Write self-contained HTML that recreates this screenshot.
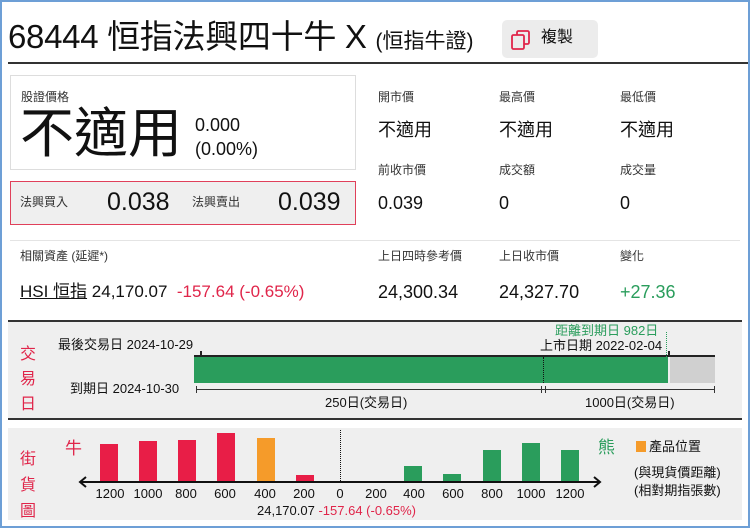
<!DOCTYPE html><html><head><meta charset="utf-8"><style>
*{margin:0;padding:0;box-sizing:border-box}
body{width:750px;height:528px;position:relative;background:#fff;font-family:"Liberation Sans","Noto Sans CJK TC",sans-serif;color:#111;overflow:hidden}
.a{position:absolute;white-space:nowrap;line-height:1}
.s{font-size:12px;color:#333}
.v{font-size:18px;color:#111}
.r{color:#e0254a}.g{color:#2a9d5c}
.bar{position:absolute;width:18px}
.lb{position:absolute;top:486px;font-size:13px;width:40px;text-align:center;margin-left:-20px}
</style></head><body>
<div style="position:absolute;inset:0;border:2px solid #6d9fd6;z-index:9;pointer-events:none"></div>
<div class="a" style="left:8px;top:20px;font-size:33px;letter-spacing:-0.3px">68444 恒指法興四十牛 X <span style="font-size:21px;letter-spacing:0">(恒指牛證)</span></div>
<div style="position:absolute;left:502px;top:20px;width:96px;height:38px;background:#ececec;border-radius:5px"></div>
<svg class="a" style="left:510px;top:29px" width="22" height="22" viewBox="0 0 22 22"><rect x="7" y="2" width="12" height="13" rx="1.5" fill="none" stroke="#e0254a" stroke-width="1.8"/><rect x="2" y="6" width="12" height="14" rx="1.5" fill="#ececec" stroke="#e0254a" stroke-width="1.8"/></svg>
<div class="a" style="left:541px;top:30px;font-size:16px">複製</div>
<div style="position:absolute;left:8px;top:62px;width:742px;height:1.5px;background:#333"></div>
<div style="position:absolute;left:10px;top:75px;width:346px;height:95px;border:1px solid #ddd"></div>
<div class="a s" style="left:21px;top:91px">股證價格</div>
<div class="a" style="left:20px;top:107px;font-size:54px">不適用</div>
<div class="a" style="left:195px;top:116px;font-size:18px">0.000</div>
<div class="a" style="left:195px;top:140px;font-size:18px">(0.00%)</div>
<div style="position:absolute;left:10px;top:181px;width:346px;height:44px;border:1.5px solid #e0405a;background:#efefef"></div>
<div class="a s" style="left:20px;top:196px">法興買入</div>
<div class="a" style="left:107px;top:190px;font-size:25px">0.038</div>
<div class="a s" style="left:192px;top:196px">法興賣出</div>
<div class="a" style="left:278px;top:190px;font-size:25px">0.039</div>
<div class="a s" style="left:378px;top:91px">開市價</div><div class="a s" style="left:499px;top:91px">最高價</div><div class="a s" style="left:620px;top:91px">最低價</div>
<div class="a v" style="left:378px;top:121px">不適用</div><div class="a v" style="left:499px;top:121px">不適用</div><div class="a v" style="left:620px;top:121px">不適用</div>
<div class="a s" style="left:378px;top:164px">前收市價</div><div class="a s" style="left:499px;top:164px">成交額</div><div class="a s" style="left:620px;top:164px">成交量</div>
<div class="a v" style="left:378px;top:194px">0.039</div><div class="a v" style="left:499px;top:194px">0</div><div class="a v" style="left:620px;top:194px">0</div>
<div style="position:absolute;left:10px;top:240px;width:730px;height:1px;background:#e4e4e4"></div>
<div class="a s" style="left:20px;top:250px">相關資產 (延遲*)</div>
<div class="a s" style="left:378px;top:250px">上日四時參考價</div><div class="a s" style="left:499px;top:250px">上日收市價</div><div class="a s" style="left:620px;top:250px">變化</div>
<div class="a" style="left:20px;top:283px;font-size:17px"><span style="text-decoration:underline">HSI 恒指</span> 24,170.07 <span class="r">&nbsp;-157.64 (-0.65%)</span></div>
<div class="a v" style="left:378px;top:283px">24,300.34</div><div class="a v" style="left:499px;top:283px">24,327.70</div><div class="a v g" style="left:620px;top:283px">+27.36</div>
<div style="position:absolute;left:8px;top:320px;width:734px;height:2px;background:#333"></div>
<div style="position:absolute;left:8px;top:322px;width:734px;height:96px;background:#efefef"></div>
<div style="position:absolute;left:8px;top:418px;width:734px;height:2px;background:#333"></div>
<div style="position:absolute;left:8px;top:428px;width:734px;height:92px;background:#efefef"></div>
<div class="a r" style="left:20px;top:342px;font-size:16px;line-height:25px;white-space:normal;width:18px">交易日</div>
<div class="a r" style="left:20px;top:447px;font-size:16px;line-height:26px;white-space:normal;width:18px">街貨圖</div>
<div class="a" style="left:58px;top:338px;font-size:13px">最後交易日 2024-10-29</div>
<div class="a g" style="left:555px;top:324px;font-size:13px">距離到期日 982日</div>
<div class="a" style="left:540px;top:339px;font-size:13px">上市日期 2022-02-04</div>
<div class="a" style="left:70px;top:382px;font-size:13px">到期日 2024-10-30</div>
<div style="position:absolute;left:194px;top:355px;width:521px;height:2px;background:#222"></div>
<div style="position:absolute;left:200px;top:351px;width:1.5px;height:5px;background:#222"></div>
<div style="position:absolute;left:668px;top:351px;width:1.5px;height:5px;background:#222"></div>
<div style="position:absolute;left:194px;top:357px;width:474px;height:26px;background:#2a9d5c"></div>
<div style="position:absolute;left:670px;top:357px;width:45px;height:26px;background:#d0d0d0"></div>
<div style="position:absolute;left:543px;top:357px;height:26px;border-left:1.5px dotted #111"></div>
<div style="position:absolute;left:666px;top:332px;height:25px;border-left:1.5px dotted #2a9d5c"></div>
<div style="position:absolute;left:196px;top:389px;width:519px;height:1px;background:#333"></div>
<div style="position:absolute;left:196px;top:386px;width:1px;height:7px;background:#333"></div>
<div style="position:absolute;left:541px;top:386px;width:1px;height:7px;background:#333"></div>
<div style="position:absolute;left:545px;top:386px;width:1px;height:7px;background:#333"></div>
<div style="position:absolute;left:714px;top:386px;width:1px;height:7px;background:#333"></div>
<div class="a" style="left:325px;top:396px;font-size:13px">250日(交易日)</div>
<div class="a" style="left:585px;top:396px;font-size:13px">1000日(交易日)</div>
<div class="a r" style="left:65px;top:440px;font-size:17px">牛</div>
<div class="a g" style="left:598px;top:439px;font-size:17px">熊</div>
<div style="position:absolute;left:636px;top:441px;width:10px;height:11px;background:#f59b2a"></div>
<div class="a" style="left:649px;top:440px;font-size:13px">產品位置</div>
<div class="a" style="left:634px;top:466px;font-size:13px">(與現貨價距離)</div>
<div class="a" style="left:634px;top:484px;font-size:13px">(相對期指張數)</div>
<div style="position:absolute;left:340px;top:430px;height:51px;border-left:1.5px dotted #111"></div>
<div class="bar" style="left:100px;top:444px;height:37px;background:#e81e47"></div>
<div class="bar" style="left:139px;top:441px;height:40px;background:#e81e47"></div>
<div class="bar" style="left:178px;top:440px;height:41px;background:#e81e47"></div>
<div class="bar" style="left:217px;top:433px;height:48px;background:#e81e47"></div>
<div class="bar" style="left:257px;top:438px;height:43px;background:#f59b2a"></div>
<div class="bar" style="left:296px;top:475px;height:6px;background:#e81e47"></div>
<div class="bar" style="left:404px;top:466px;height:15px;background:#2a9d5c"></div>
<div class="bar" style="left:443px;top:474px;height:7px;background:#2a9d5c"></div>
<div class="bar" style="left:483px;top:450px;height:31px;background:#2a9d5c"></div>
<div class="bar" style="left:522px;top:443px;height:38px;background:#2a9d5c"></div>
<div class="bar" style="left:561px;top:450px;height:31px;background:#2a9d5c"></div>
<svg class="a" style="left:76px;top:475px" width="528" height="14"><path d="M4 7H524M10 2L4 7L10 12M518 2L524 7L518 12" stroke="#111" stroke-width="2" fill="none"/></svg>
<div class="lb" style="left:110px">1200</div><div class="lb" style="left:148px">1000</div><div class="lb" style="left:186px">800</div><div class="lb" style="left:225px">600</div><div class="lb" style="left:265px">400</div><div class="lb" style="left:304px">200</div><div class="lb" style="left:340px">0</div><div class="lb" style="left:376px">200</div><div class="lb" style="left:414px">400</div><div class="lb" style="left:453px">600</div><div class="lb" style="left:492px">800</div><div class="lb" style="left:531px">1000</div><div class="lb" style="left:570px">1200</div>
<div class="a" style="left:257px;top:504px;font-size:13px">24,170.07 <span class="r">-157.64 (-0.65%)</span></div>
</body></html>
